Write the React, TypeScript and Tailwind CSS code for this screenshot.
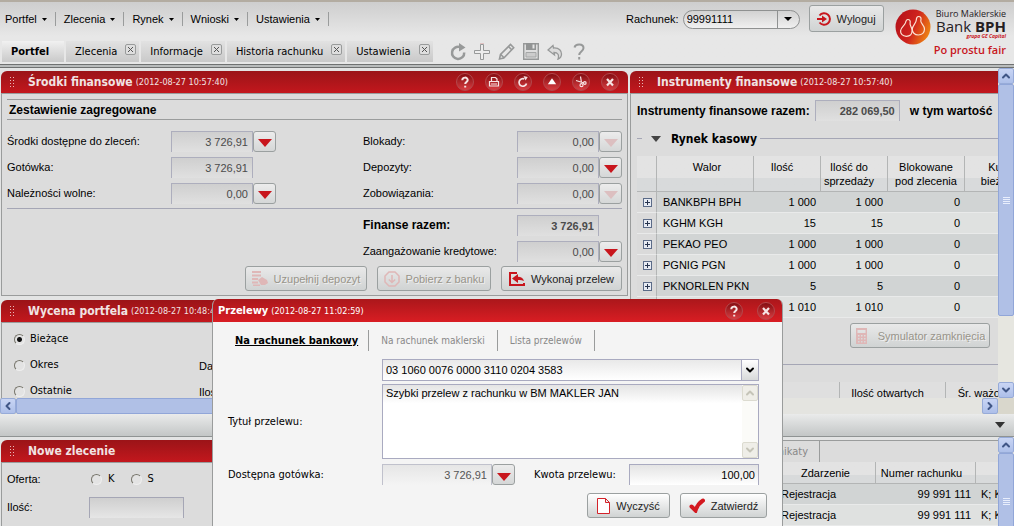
import type { ReactNode } from 'react';
import { ChevronDown, ChevronLeft, ChevronRight, ChevronUp } from 'lucide-react';

const MENU = ['Portfel', 'Zlecenia', 'Rynek', 'Wnioski', 'Ustawienia'];
const TABS = ['Zlecenia', 'Informacje', 'Historia rachunku', 'Ustawienia'];

const TAHOMA = "font-['DejaVu_Sans_Condensed','Noto_Sans',sans-serif]";

const POSITIONS = [
  { name: 'BANKBPH BPH', qty: '1 000' },
  { name: 'KGHM KGH', qty: '15' },
  { name: 'PEKAO PEO', qty: '1 000' },
  { name: 'PGNIG PGN', qty: '1 000' },
  { name: 'PKNORLEN PKN', qty: '5' },
  { name: '', qty: '1 010' },
];

const ROUND_ICONS: Record<string, ReactNode> = {
  Pomoc: <path d="M6.3 7.2c0-3.4 5.4-3.4 5.4-.2 0 2-2.5 2-2.5 4M9.2 12.8v1.8" strokeWidth="2" />,
  Drukuj: (
    <g strokeWidth="1.2">
      <path d="M6.500 8V4.500h4L12 6v2M4.500 8.500h9v4.500h-9zM6 11h6" />
    </g>
  ),
  Odśwież: (
    <>
      <path d="M12.500 10.500a3.800 3.800 0 1 1-2.200-4.600" strokeWidth="1.700" />
      <path d="M9.500 3l4.300 1-2.300 3.600z" fill="#f3dcdc" stroke="none" />
    </>
  ),
  Zwiń: <path d="M9 5.300l4.200 6H4.800z" fill="#fff" stroke="none" />,
  Ustaw: (
    <g strokeWidth="1.200">
      <path d="M8.500 3.500l1 6M4 7.500l8 2.500" />
      <circle cx="9.500" cy="12.200" r="1.500" />
      <circle cx="12.800" cy="10" r="1.300" />
    </g>
  ),
  Zamknij: <path d="M6 6l6 6.500M12 6l-6 6.500" strokeWidth="2.200" />,
};

function RoundButton({ name }: { name: string }) {
  return (
    <button
      aria-label={name}
      className="size-[18px] shrink-0 rounded-full border border-[#b3484c] bg-linear-to-b from-[#850c11] to-[#d93d42]"
    >
      <svg viewBox="1 1 16 16" className="size-4" fill="none" stroke="#f6e4e4">
        {ROUND_ICONS[name]}
      </svg>
    </button>
  );
}

function Grip() {
  return (
    <svg className="mr-[13px] h-[11px] w-[5px]" fill="#e9b9b9">
      {[0, 3, 6, 9].map((y) => (
        <g key={y}>
          <rect x="0" y={y} width="1" height="1" />
          <rect x="3" y={y} width="1" height="1" />
        </g>
      ))}
    </svg>
  );
}

function Panel({ title, time, actions, open, children }: {
  title: string;
  time?: string;
  actions?: ReactNode;
  open?: boolean;
  children: ReactNode;
}) {
  return (
    <section className="min-w-0">
      <header
        className={`flex h-[22px] items-center bg-linear-to-b from-[#9b1418] to-[#c3171d] pr-[9px] pl-[9px] text-[#f1e3e3] ${
          open ? 'rounded-tl-[6px]' : 'rounded-t-[6px]'
        } ${TAHOMA}`}
      >
        <Grip />
        <h2 className="text-xs font-bold whitespace-nowrap">{title}</h2>
        {time && <span className="ml-[3px] text-[9px] whitespace-nowrap">({time})</span>}
        {actions && <div className="ml-auto flex gap-[11px]">{actions}</div>}
      </header>
      <div className={`border-[#9a9c9c] bg-[#dcdcdc] ${open ? 'h-full border-l' : 'border'} border-t`}>{children}</div>
    </section>
  );
}

function DropButton({ label, disabled }: { label: string; disabled?: boolean }) {
  return (
    <button
      aria-label={label}
      disabled={disabled}
      className="flex h-[21px] w-[23px] shrink-0 items-center justify-center rounded-[3px] border border-[#9ba0a0] bg-linear-to-b from-[#ececec] to-[#d5d7d7]"
    >
      <svg viewBox="0 0 14 8" className={`mt-1 h-2 w-3.5 ${disabled ? 'fill-[#dcbfc0]' : 'fill-[#c8161d]'}`}>
        <path d="M0 0h14L7 8z" />
      </svg>
    </button>
  );
}

function MoneyRow({ id, label, value, drop, off, bold }: {
  id: string;
  label: string;
  value: string;
  drop?: boolean;
  off?: boolean;
  bold?: boolean;
}) {
  return (
    <div className="flex h-[26px] items-center">
      <label htmlFor={id} className={`flex-1 whitespace-nowrap ${bold ? 'text-xs font-bold' : ''}`}>{label}</label>
      <input
        id={id}
        readOnly
        value={value}
        className={`h-[21px] w-[82px] border border-b-0 border-[#adaebd] bg-linear-to-b from-[#cfcfcf] to-[#e0e0e0] pr-1 text-right text-[#4b4b4b] ${
          bold ? 'font-bold' : ''
        }`}
      />
      {drop ? <DropButton label={`${label} szczegóły`} disabled={off} /> : <span className="w-[23px]" />}
    </div>
  );
}

function PushButton({ icon, children, disabled, className = '' }: {
  icon: ReactNode;
  children: ReactNode;
  disabled?: boolean;
  className?: string;
}) {
  return (
    <button
      disabled={disabled}
      className={`flex h-[25px] items-center justify-center gap-1.5 rounded-[3px] border border-[#9ba0a0] bg-linear-to-b from-[#e9e9e9] to-[#d0d3d3] whitespace-nowrap ${
        disabled ? 'text-[#98948a] [text-shadow:1px_1px_0_#efefef]' : 'text-[#222]'
      } ${className}`}
    >
      {icon}
      {children}
    </button>
  );
}

function ScrollArrow({ dir }: { dir: 'up' | 'down' | 'left' | 'right' }) {
  const Icon = { up: ChevronUp, down: ChevronDown, left: ChevronLeft, right: ChevronRight }[dir];
  return (
    <button
      aria-label={dir}
      className="flex size-4 shrink-0 items-center justify-center rounded-[2px] border border-[#97abd8] bg-linear-to-b from-[#c9d5f4] to-[#adbfe9] text-[#405686]"
    >
      <Icon className="size-3" strokeWidth={4} />
    </button>
  );
}

function VScroll({ thumb, end }: { thumb: string; end?: boolean }) {
  return (
    <div className="flex w-4 shrink-0 flex-col bg-[#e6e6e0]">
      <ScrollArrow dir="up" />
      <div className="flex min-h-0 flex-1 flex-col">
        <div className={`flex shrink-0 flex-col items-center justify-center gap-px rounded-[2px] border border-[#91a6d8] bg-[#b0c0e6] ${thumb}`}>
          {[0, 1, 2, 3].map((i) => <i key={i} className="h-px w-[7px] bg-[#e8eefc]" />)}
        </div>
      </div>
      {end && <ScrollArrow dir="down" />}
    </div>
  );
}

function Toolbar() {
  return (
    <div className="flex items-center gap-2 pl-[15px]">
      <button aria-label="Odśwież">
        <svg viewBox="0 0 16 18" className="h-[18px] w-4" fill="none" stroke="#979999" strokeWidth="2.500">
          <path d="M14.200 9.500a6.100 6.100 0 1 1-4-5.300" />
          <path d="M9 0l6.500 4.500L9 8.500z" fill="#979999" stroke="none" />
        </svg>
      </button>
      <button aria-label="Dodaj">
        <svg viewBox="0 0 16 18" className="h-[18px] w-4" fill="#ededed" stroke="#979999">
          <path d="M6.500 1.500h3v6h6v3h-6v6h-3v-6h-6v-3h6z" />
          <path d="M6 0h4" stroke="#dda0a0" />
        </svg>
      </button>
      <button aria-label="Edytuj">
        <svg viewBox="0 0 17 18" className="h-[18px] w-[17px]" fill="none" stroke="#979999" strokeWidth="1.600">
          <path d="M1.500 16l1-4.500L12.500 1.500l3.200 3.200L5.800 15zM10.500 3.500l3.200 3.200M2.800 11.500l3 3" />
        </svg>
      </button>
      <button aria-label="Zapisz">
        <svg viewBox="0 0 16 17" className="h-[17px] w-4">
          <path d="M.7.700h14.600v15.600H.7z" fill="#dedede" stroke="#979999" strokeWidth="1.400" />
          <path d="M3 0h10v7H3z" fill="#929494" />
          <path d="M9.500 1.500h2v4h-2z" fill="#e5e5e5" />
          <path d="M3 9.500h10v4.500H3z" fill="#ccc" stroke="#a5a7a7" />
        </svg>
      </button>
      <button aria-label="Cofnij">
        <svg viewBox="0 0 16 17" className="h-[17px] w-4" fill="#dcdcdc" stroke="#979999" strokeWidth="1.300">
          <path d="M1 7l5-4.500.5 2.500c6-.5 8 3 8 6 0 2-1 4-3.500 5.200C12.300 12 11 9.500 7 9.500L7.500 12z" />
        </svg>
      </button>
      <button aria-label="Pomoc">
        <svg viewBox="0 0 16 18" className="h-[18px] w-4" fill="none" stroke="#979999" strokeWidth="2">
          <path d="M3.500 4.500C4.500.5 12.500.5 12.500 5c0 3.500-4.300 3.500-4.300 7M8.200 14v2.500" />
        </svg>
      </button>
    </div>
  );
}

function Logo() {
  return (
    <a href="#" className="flex gap-[3px] pt-[5px] font-['Open_Sans',sans-serif] whitespace-nowrap">
      <svg viewBox="0 0 36 40" className="mt-0.5 h-10 w-9">
        <defs>
          <linearGradient id="sphere" x1="0" x2="1" y1=".3" y2=".7">
            <stop offset="0" stopColor="#b5121b" />
            <stop offset=".5" stopColor="#cf231d" />
            <stop offset="1" stopColor="#f08a12" />
          </linearGradient>
        </defs>
        <circle cx="18" cy="18" r="17.500" fill="url(#sphere)" />
        <g fill="none" stroke="#fbe3d4" strokeWidth="1.200">
          <path d="M12.800 10.500c2 0 2.800 1.500 2.300 3.500-.6 2.500 2 4 2 7.500s-2.200 5.800-5.800 5.800-6-2.500-5.700-5.600c.3-3.500 4-5 4.800-7.800.4-1.800.8-3.400 2.400-3.400z" />
          <path d="M23.500 7.500c2.300 0 3 1.700 2.300 4-.7 2.500 3.700 4.500 3.700 8.500 0 3.600-2.500 6-6.200 6s-6.200-2.600-6-6c.2-3.800 3.800-5.500 4-9 .1-2 .7-3.500 2.200-3.500z" />
        </g>
      </svg>
      <span className="flex flex-col items-end text-[#25201f]">
        <span className="text-[9px] leading-[14px]">Biuro Maklerskie</span>
        <span className="text-[15px] leading-[11px]">Bank <b>BPH</b></span>
        <span className="text-[5px] leading-[9px] font-bold text-[#c8161d] italic">grupa GE Capital</span>
        <span className="pt-px text-[11px] leading-4 font-semibold text-[#c8161d]">Po prostu fair</span>
      </span>
    </a>
  );
}

function TopBar() {
  return (
    <header className="flex h-16 shrink-0 border-t-2 border-t-[#b3aca1] bg-linear-to-b from-[#cecece] to-[#e7e7e7] to-55% pr-2">
      <div className="flex min-w-0 flex-1 flex-col">
        <nav className="flex h-[34px] items-center pl-[5px]">
          {MENU.map((m) => (
            <button key={m} className="mr-2 flex items-center gap-[5px] border-r border-[#9a9c9c] pr-2">
              {m}
              <svg viewBox="0 0 5 3" className="h-[3px] w-[5px]"><path d="M0 0h5L2.500 3z" /></svg>
            </button>
          ))}
        </nav>
        <div className={`flex h-6 items-center gap-0.5 pt-[7px] pl-0.5 ${TAHOMA}`}>
          <div className="flex h-[21px] items-center bg-linear-to-b from-[#f1f1f1] to-[#c9c9c9] pr-[15px] pl-[9px] font-bold">
            <button>Portfel</button>
          </div>
          {TABS.map((t) => (
            <div key={t} className="flex h-[21px] items-center gap-2 bg-linear-to-b from-[#e2e2e2] to-[#c9c9c9] pr-[3px] pl-[9px] whitespace-nowrap">
              <button>{t}</button>
              <button aria-label={`Zamknij ${t}`} className="mb-1 size-[11px] rounded-[2px] border border-[#999b9b] bg-[#dedede]">
                <svg viewBox="0 0 9 9" stroke="#555"><path d="M2 2l5 5M7 2L2 7" /></svg>
              </button>
            </div>
          ))}
          <Toolbar />
        </div>
      </div>
      <div className="flex gap-[9px] pt-[3px]">
        <div className="flex h-7 items-center gap-1">
          <label htmlFor="account">Rachunek:</label>
          <div className="flex h-[19px] w-[117px] items-center overflow-hidden rounded-full border border-[#8f9191] bg-linear-to-b from-[#d2d2d2] to-[#f0f0f0]">
            <select id="account" className="h-full flex-1 appearance-none border-r border-[#8f9191] pl-[3px]">
              <option>99991111</option>
            </select>
            <svg viewBox="0 0 8 4" className="mr-[7px] ml-1.5 h-1 w-2"><path d="M0 0h8L4 4z" /></svg>
          </div>
        </div>
        <PushButton
          className="h-[27px] w-[75px]"
          icon={
            <svg viewBox="0 0 14 14" className="size-3.5" fill="none" stroke="#c8161d" strokeWidth="2">
              <path d="M2.500 3.500A5.800 5.800 0 1 1 2.500 10.500M0 7h6" />
              <path d="M5 3.500L10 7l-5 3.500z" fill="#c8161d" stroke="none" />
            </svg>
          }
        >
          Wyloguj
        </PushButton>
      </div>
      <div className="pl-[11px]"><Logo /></div>
    </header>
  );
}

function Funds() {
  return (
    <Panel
      title="Środki finansowe"
      time="2012-08-27 10:57:40"
      actions={Object.keys(ROUND_ICONS).map((n) => <RoundButton key={n} name={n} />)}
    >
      <div className="px-[5px] pt-[5px] pb-1">
        <h3 className="flex h-[21px] items-center border-y border-[#9a9c9c] pl-0.5 text-xs font-bold">Zestawienie zagregowane</h3>
        <div className="grid grid-cols-[269fr_87fr_259fr] border-b border-[#a5a6b5] pt-2 pb-0.5">
          <div>
            <MoneyRow id="free" label="Środki dostępne do zleceń:" value="3 726,91" drop />
            <MoneyRow id="cash" label="Gotówka:" value="3 726,91" />
            <MoneyRow id="due" label="Należności wolne:" value="0,00" drop />
          </div>
          <div className="col-start-3">
            <MoneyRow id="blocks" label="Blokady:" value="0,00" drop off />
            <MoneyRow id="deposits" label="Depozyty:" value="0,00" drop />
            <MoneyRow id="debts" label="Zobowiązania:" value="0,00" drop off />
          </div>
        </div>
        <div className="grid grid-cols-[269fr_87fr_259fr] pt-[3px]">
          <div className="col-start-3">
            <MoneyRow id="total" label="Finanse razem:" value="3 726,91" bold />
            <MoneyRow id="credit" label="Zaangażowanie kredytowe:" value="0,00" drop />
          </div>
        </div>
        <div className="flex justify-end gap-2.5 pt-0.5">
          <PushButton
            disabled
            className="w-[122px]"
            icon={
              <svg viewBox="0 0 16 15" className="h-[15px] w-4" fill="#dfb7b7">
                <path d="M0 0h9v2H0zM0 3.500h9v2H0zM0 7h6v2H0zM0 10.500h6v2H0zM1 13.500h7v1.500H1zM6 9l4-3 5 3 1 3-3 2H9z" />
              </svg>
            }
          >
            Uzupełnij depozyt
          </PushButton>
          <PushButton
            disabled
            className="w-[114px]"
            icon={
              <svg viewBox="0 0 16 16" className="size-4" fill="none" stroke="#dfb7b7" strokeWidth="1.500">
                <path d="M5 1h6l4 4v6l-4 4H5l-4-4V5zM8 4v7M4.800 8.500L8 11.500l3.200-3" />
              </svg>
            }
          >
            Pobierz z banku
          </PushButton>
          <PushButton
            className="w-[121px]"
            icon={
              <svg viewBox="0 0 16 14" className="h-3.5 w-4" fill="none" stroke="#c8161d" strokeWidth="2">
                <path d="M8 1H1v12h14v-2" />
                <path d="M3 6.500L9 2v2.700c3 0 5 1.300 6 4.300-2-1-4-1.200-6-1v3z" fill="#c8161d" stroke="none" />
              </svg>
            }
          >
            Wykonaj przelew
          </PushButton>
        </div>
      </div>
    </Panel>
  );
}

function Radio({ name, checked }: { name: string; checked?: boolean }) {
  return (
    <input
      type="radio"
      name={name}
      defaultChecked={checked}
      className="size-[11px] appearance-none rounded-full border border-t-[#77756b] border-r-[#eee] border-b-[#eee] border-l-[#77756b] bg-[#e3e3e3] checked:bg-[radial-gradient(circle,#111_2px,#e3e3e3_3px)]"
    />
  );
}

function Valuation() {
  return (
    <Panel title="Wycena portfela" time="2012-08-27 10:48:40">
      <div className={`pt-[3px] pl-3 ${TAHOMA}`}>
        {['Bieżące', 'Okres', 'Ostatnie'].map((o, i) => (
          <div key={o} className="flex h-[26px] items-center">
            <label className="flex w-[185px] items-center gap-[5px]">
              <Radio name="period" checked={i === 0} />
              {o}
            </label>
            <span className="pt-0.5 font-['Liberation_Sans',sans-serif]">{['', 'Data:', 'Ilość:'][i]}</span>
          </div>
        ))}
      </div>
    </Panel>
  );
}

function Instruments() {
  const th = 'border-r border-b border-[#b3b5b5] pt-1 align-top font-normal leading-[14px]';
  const td = 'border-b border-[#e9eaea]';
  return (
    <Panel title="Instrumenty finansowe" time="2012-08-27 10:57:40" open>
      <div className="overflow-hidden pt-1.5 pl-1.5">
        <div className="flex h-[21px] items-center text-xs font-bold whitespace-nowrap">
          <label htmlFor="instruments" className="mr-[5px]">Instrumenty finansowe razem:</label>
          <input
            id="instruments"
            readOnly
            value="282 069,50"
            className="mr-2.5 h-[21px] w-[85px] shrink-0 border border-b-0 border-[#adaebd] bg-linear-to-b from-[#cfcfcf] to-[#e0e0e0] pr-1 text-right text-[11px] text-[#4b4b4b]"
          />
          <span>w tym wartość</span>
        </div>
        <h3 className={`flex h-[35px] items-center text-xs font-bold ${TAHOMA}`}>
          <i className="h-px w-[5px] bg-[#a5a6b5]" />
          <svg viewBox="0 0 10 6" className="mr-2.5 ml-[9px] h-1.5 w-2.5" fill="#444"><path d="M0 0h10L5 6z" /></svg>
          Rynek kasowy
          <i className="ml-[3px] h-px flex-1 bg-[#a5a6b5]" />
        </h3>
        <table className="w-[398px] table-fixed border-separate border-spacing-0">
          <colgroup>
            <col className="w-5" />
            <col className="w-[97px]" />
            <col className="w-[67px]" />
            <col className="w-[67px]" />
            <col className="w-[77px]" />
            <col className="w-[70px]" />
          </colgroup>
          <thead>
            <tr className="h-9 bg-linear-to-b from-[#e3e3e3] from-60% to-[#d8dadb] to-60%">
              <th className={th} />
              <th className={`pl-1 ${th}`}>Walor</th>
              <th className={`pr-2.5 ${th}`}>Ilość</th>
              <th className={`pr-2.5 ${th}`}>Ilość do sprzedaży</th>
              <th className={`px-1 ${th}`}>Blokowane pod zlecenia</th>
              <th className={`px-1 ${th}`}>Kurs bieżący</th>
            </tr>
          </thead>
          <tbody>
            {POSITIONS.map((p) => (
              <tr key={p.name} className="h-[21px] odd:bg-[#d1d4d4] even:bg-[#dfe1e0]">
                <td className="border-r border-b border-r-[#b3b5b5] border-b-[#e9eaea] bg-[#dadada] pl-1.5">
                  {p.name && (
                    <button aria-label={`Rozwiń ${p.name}`} className="block size-[9px] border border-[#5b6b88] bg-[#e7ebf3]">
                      <svg viewBox="0 0 7 7" stroke="#27344f"><path d="M1 3.500h5M3.500 1v5" /></svg>
                    </button>
                  )}
                </td>
                <td className={`pl-1.5 ${td}`}>{p.name}</td>
                <td className={`pr-[5px] text-right ${td}`}>{p.qty}</td>
                <td className={`pr-[5px] text-right ${td}`}>{p.qty}</td>
                <td className={`pr-[5px] text-right ${td}`}>0</td>
                <td className={td} />
              </tr>
            ))}
          </tbody>
        </table>
        <div className="flex justify-end border-b border-[#a5a6b5] pt-[5px] pr-2 pb-4">
          <PushButton
            disabled
            className="w-[140px]"
            icon={
              <svg viewBox="0 0 13 16" className="mr-1 h-4 w-[13px]" fill="#dfb7b7">
                <path fillRule="evenodd" d="M1 0h11v16H1zM2.500 2v3h8V2zM3 7v1.500h1.500V7zM6 7v1.500h1.500V7zM9 7v1.500h1.500V7zM3 10v1.500h1.500V10zM6 10v1.500h1.500V10zM9 10v1.500h1.500V10zM3 13v1.500h1.500V13zM6 13v1.500h1.500V13zM9 13v1.500h1.500V13z" />
              </svg>
            }
          >
            Symulator zamknięcia
          </PushButton>
        </div>
        <table className="mt-[17px] w-[398px] table-fixed border-separate border-spacing-0">
          <thead>
            <tr className="h-9 bg-[#dfdfdf]">
              <th className={`w-[203px] ${th}`} />
              <th className={`w-[106px] pr-2.5 ${th}`}>Ilość otwartych</th>
              <th className={`w-[89px] pr-2.5 ${th}`}>Śr. ważona</th>
            </tr>
          </thead>
        </table>
      </div>
    </Panel>
  );
}

function Events() {
  const th = 'border-r border-b border-[#b3b5b5] text-center font-normal';
  return (
    <section className="min-w-0 overflow-hidden border-t border-[#9a9c9c] bg-[#dcdcdc]">
      <div className="flex h-[21px]">
        <button className={`flex w-[190px] items-center justify-end border-r border-[#9a9c9c] pr-[11px] text-[#888] ${TAHOMA}`}>Komunikaty</button>
      </div>
      <table className="w-[420px] table-fixed border-separate border-spacing-0 whitespace-nowrap">
        <thead>
          <tr className="h-[22px] bg-linear-to-b from-[#e3e3e3] from-60% to-[#d8dadb] to-60%">
            <th className={`w-[146px] ${th}`} />
            <th className={`w-[100px] ${th}`}>Zdarzenie</th>
            <th className={`w-[100px] pr-2 ${th}`}>Numer rachunku</th>
            <th className={`w-[74px] ${th}`} />
          </tr>
        </thead>
        <tbody>
          {[0, 1].map((i) => (
            <tr key={i} className="h-[21px] odd:bg-[#d1d4d4] even:bg-[#dfe1e0]">
              <td className="border-b border-[#e9eaea]" />
              <td className="border-b border-[#e9eaea] pl-[5px]">Rejestracja</td>
              <td className="border-b border-[#e9eaea] pr-[5px] text-right">99 991 111</td>
              <td className="border-b border-[#e9eaea] pl-[5px]">K; KGHM</td>
            </tr>
          ))}
        </tbody>
      </table>
    </section>
  );
}

function TransferDialog() {
  const row = 'grid grid-cols-[154px_1fr] items-center';
  return (
    <div
      role="dialog"
      aria-label="Przelewy"
      className="absolute top-[299px] bottom-0 left-[212px] w-[571px] overflow-hidden rounded-t-[6px] border-x border-[#9a9c9c] bg-[#f4f4f4]"
    >
      <header className={`flex h-[23px] items-center bg-linear-to-b from-[#ab171b] to-[#d91d23] pr-[7px] pl-[5px] text-white ${TAHOMA}`}>
        <h2 className="font-bold">Przelewy</h2>
        <span className="ml-[3px] flex-1 text-[9px]">(2012-08-27 11:02:59)</span>
        <div className="flex gap-3.5">
          <RoundButton name="Pomoc" />
          <RoundButton name="Zamknij" />
        </div>
      </header>
      <nav className={`mt-2 ml-[22px] flex h-[21px] text-[10px] text-[#888] ${TAHOMA}`}>
        <button className="border-r border-[#9a9c9c] pr-2.5 text-[11px] font-bold text-black underline">Na rachunek bankowy</button>
        <button className="border-r border-[#9a9c9c] px-3">Na rachunek maklerski</button>
        <button className="border-r border-[#9a9c9c] px-3">Lista przelewów</button>
      </nav>
      <form className="pt-2 pr-[23px] pl-[15px]">
        <div className="relative ml-[154px] h-[22px] border border-[#a9aac0] bg-linear-to-b from-[#e9e9e9] to-white">
          <select aria-label="Rachunek bankowy" className="h-full w-full appearance-none pl-[3px]">
            <option>03 1060 0076 0000 3110 0204 3583</option>
          </select>
          <span className="pointer-events-none absolute inset-y-0 right-0 flex w-[17px] items-center justify-center border-l border-[#a9aac0] bg-linear-to-b from-white to-[#d8dada]">
            <ChevronDown className="size-3" strokeWidth={4} />
          </span>
        </div>
        <div className={`mt-[3px] ${row}`}>
          <label htmlFor="subject" className={TAHOMA}>Tytuł przelewu:</label>
          <div className="flex h-[75px] border border-[#a9aac0] bg-linear-to-b from-[#e4e4e4] to-white to-25%">
            <textarea id="subject" defaultValue="Szybki przelew z rachunku w BM MAKLER JAN" className="min-w-0 flex-1 resize-none overflow-hidden px-[3px] pt-px" />
            <div className="flex w-4 flex-col justify-between bg-[#fbfbf8] text-[#c5c4b8]">
              <span className="flex size-4 items-center justify-center rounded-[2px] border border-[#dcdbd0] bg-[#efeee8]"><ChevronUp className="size-3" strokeWidth={4} /></span>
              <span className="flex size-4 items-center justify-center rounded-[2px] border border-[#dcdbd0] bg-[#efeee8]"><ChevronDown className="size-3" strokeWidth={4} /></span>
            </div>
          </div>
        </div>
        <div className={`mt-[5px] ${row}`}>
          <label htmlFor="available" className={TAHOMA}>Dostępna gotówka:</label>
          <div className="flex items-center">
            <input
              id="available"
              readOnly
              value="3 726,91"
              className="h-[21px] w-[110px] border border-b-0 border-[#c0c1cc] bg-linear-to-b from-[#e6e6e6] to-[#f4f4f4] pr-1 text-right text-[#555]"
            />
            <DropButton label="Dostępna gotówka szczegóły" />
            <label htmlFor="amount" className={`flex-1 pl-[19px] whitespace-nowrap ${TAHOMA}`}>Kwota przelewu:</label>
            <input
              id="amount"
              defaultValue="100,00"
              className="h-[21px] w-[130px] border border-b-0 border-[#a9aac0] bg-linear-to-b from-[#e4e4e4] to-white pr-[3px] text-right"
            />
          </div>
        </div>
        <div className="-mr-2 flex justify-end gap-2.5 pt-2">
          <PushButton
            className="w-[83px] from-white"
            icon={
              <svg viewBox="0 0 13 16" className="h-4 w-[13px]" fill="#fff" stroke="#d3222a">
                <path d="M.5.500h8l4 4v11H.5zM8.500.500v4h4" />
              </svg>
            }
          >
            Wyczyść
          </PushButton>
          <PushButton
            className="w-[87px] from-white"
            icon={
              <svg viewBox="0 0 16 15" className="h-[15px] w-4" fill="none" stroke="#d31920" strokeWidth="4" strokeLinecap="round">
                <path d="M2.500 8.500L6.500 12.500C8 8 10 5 14 2.500" />
              </svg>
            }
          >
            Zatwierdź
          </PushButton>
        </div>
      </form>
    </div>
  );
}

export default function App() {
  return (
    <div className="relative flex h-screen flex-col overflow-hidden bg-[#e3e4e4] font-['Liberation_Sans',Arial,sans-serif] text-[11px] leading-[14px] text-black">
      <TopBar />
      <div className="h-1 shrink-0 border-y border-[#6f7171] bg-[#b9bcbc]" />
      <div className="flex min-h-0 grow-[330] basis-0 overflow-hidden">
        <main className="grid min-w-0 flex-1 grid-cols-[627fr_368fr] gap-0.5 overflow-hidden pt-[3px] pl-px">
          <div className="flex min-w-0 flex-col gap-1">
            <Funds />
            <Valuation />
          </div>
          <Instruments />
        </main>
        <VScroll thumb="h-[78%]" end />
      </div>
      <div className="flex h-4 shrink-0 bg-[#d9d7cc]">
        <ScrollArrow dir="left" />
        <div className="flex-1 bg-[#e4e4e0]">
          <div className="h-full w-3/5 rounded-[2px] border border-[#91a6d8] bg-[#b0c0e6]" />
        </div>
        <ScrollArrow dir="right" />
        <span className="w-4" />
      </div>
      <div className="flex h-[23px] shrink-0 items-center justify-end border-b border-[#8f9393] bg-linear-to-b from-[#eaebeb] to-[#c3c6c6] pr-[9px]">
        <button aria-label="Zwiń">
          <svg viewBox="0 0 10 6" className="h-1.5 w-2.5" fill="#333"><path d="M0 0h10L5 6z" /></svg>
        </button>
      </div>
      <div className="flex min-h-0 grow-[89] basis-0 overflow-hidden">
        <div className="grid min-w-0 flex-1 grid-cols-[627fr_368fr] gap-0.5 overflow-hidden pt-[3px] pl-px">
          <Panel title="Nowe zlecenie">
            <div className="px-[5px] pt-0.5 pb-10">
              <div className="flex h-7 items-center">
                <span className="w-[84px]">Oferta:</span>
                <label className={`mr-4 flex items-center gap-1.5 ${TAHOMA}`}><Radio name="side" /> K</label>
                <label className={`flex items-center gap-1.5 ${TAHOMA}`}><Radio name="side" /> S</label>
              </div>
              <div className="flex h-7 items-center">
                <label htmlFor="count" className="w-[82px]">Ilość:</label>
                <input id="count" className="h-[21px] w-[95px] border border-b-0 border-[#a5a6b5] bg-linear-to-b from-[#cfcfcf] to-[#e6e6e6]" />
              </div>
            </div>
          </Panel>
          <Events />
        </div>
        <VScroll thumb="h-[96px]" />
      </div>
      <TransferDialog />
    </div>
  );
}
